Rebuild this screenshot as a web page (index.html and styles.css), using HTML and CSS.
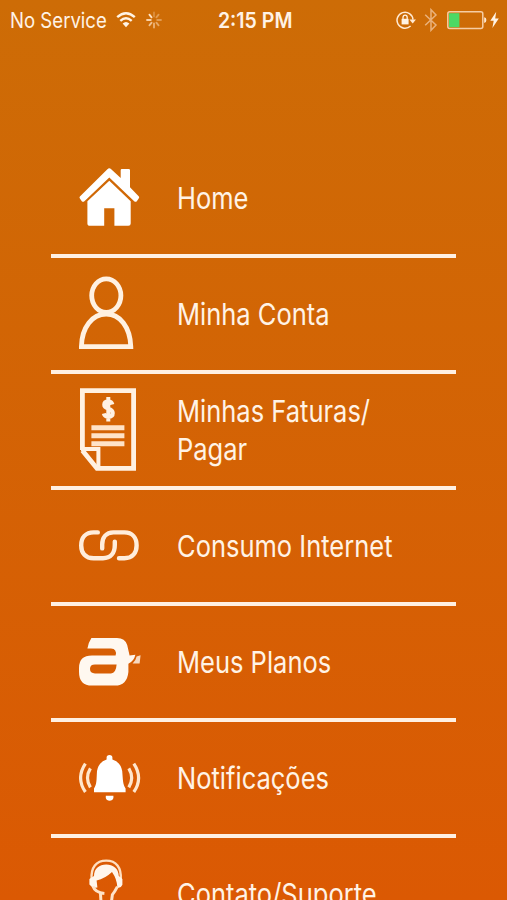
FILE: index.html
```html
<!DOCTYPE html>
<html lang="pt-BR">
<head>
    <meta charset="UTF-8">
    <meta name="viewport" content="width=device-width, initial-scale=1.0">
    <title>Menu</title>
    <link rel="stylesheet" href="styles.css">
</head>
<body>

<header class="status">
    <div class="status-left">
        <span class="service">No Service</span>
        <svg class="wifi" width="20" height="18" viewBox="0 0 20 18">
            <path d="M1.2 6.2Q10-1.8 18.8 6.2M4.3 9.8Q10 4.6 15.7 9.8" fill="none" stroke="#fff3e4" stroke-width="2.4"/>
            <path d="M6.6 12.4Q10 9.4 13.4 12.4L10 16.2Z" fill="#fff3e4"/>
        </svg>
        <svg class="spinner" width="16" height="18" viewBox="0 0 16 18" fill="none" stroke="#ffe3c4" stroke-width="1.8" stroke-linecap="round">
            <path d="M8 1.5V5.5" opacity=".3"/>
            <path d="M12.6 3.6L10.4 6.4" opacity=".4"/>
            <path d="M15 9H11.2" opacity=".4"/>
            <path d="M12.6 14.4L10.4 11.6" opacity=".5"/>
            <path d="M8 16.5V12.5" opacity=".6"/>
            <path d="M3.4 14.4L5.6 11.6" opacity=".7"/>
            <path d="M1 9H4.8" opacity=".85"/>
            <path d="M3.4 3.6L5.6 6.4"/>
        </svg>
    </div>
    <span class="time">2:15 PM</span>
    <div class="status-right">
        <svg class="lock" width="20" height="20" viewBox="0 0 20 20">
            <path d="M14.6 16A8 8 0 1 1 17 9.6" fill="none" stroke="#ffe9d2" stroke-width="1.5"/>
            <path d="M13.4 9.6H20L16.7 13.4Z" fill="#ffe9d2"/>
            <rect x="5.6" y="8.8" width="7" height="5.6" fill="#fff3e4"/>
            <path d="M7 9V7.4a2.1 2.3 0 0 1 4.2 0V9" fill="none" stroke="#fff3e4" stroke-width="1.3"/>
        </svg>
        <svg class="bluetooth" width="14" height="24" viewBox="0 0 14 24">
            <path d="M1.2 6.8L12 17L7 22.3V1.7L12 7L1.2 17.2" fill="none" stroke="#eab27c" stroke-width="1.5"/>
        </svg>
        <svg class="battery" width="40" height="20" viewBox="0 0 40 20">
            <rect x=".8" y="1.8" width="35" height="16.6" rx="2" fill="none" stroke="#f6cda4" stroke-width="1.5"/>
            <rect x="2" y="3.2" width="10.4" height="14" fill="#4cd964"/>
            <path d="M37.2 7.2Q39.4 7.4 39.4 10T37.2 13Z" fill="#ffe9d2"/>
        </svg>
        <svg class="bolt" width="9" height="18" viewBox="0 0 9 18">
            <path d="M6.2 .8L.3 9.8H3.7L2.4 17L8.8 7.6H5.2Z" fill="#fff3e4"/>
        </svg>
    </div>
</header>

<nav class="menu">
    <a class="item">
        <svg class="icon" viewBox="0 0 64 112" fill="#fff">
            <path d="M28.4 27.2Q30.3 25.4 32.2 27.2L41.7 36V28.2Q41.7 27 42.9 27H49.8Q51 27 51 28.2V45.2L59.9 54.4Q60.6 55.5 59.7 56.5L57.8 59.2Q56.6 60.4 55.2 59.2L30.3 35.4L5.4 59.2Q4 60.4 2.8 59.2L.9 56.5Q0 55.5 .9 54.4Z"/>
            <path d="M30.3 38.8L51.7 59.2V81.4Q51.7 83.8 49.4 83.8H35.4V66.2H25.2V83.8H11Q8.4 83.8 8.4 81.4V59.2Z"/>
        </svg>
        <span class="label">Home</span>
    </a>
    <a class="item">
        <svg class="icon" viewBox="0 0 64 112" fill="none" stroke="#fff1e2" stroke-width="4.8">
            <ellipse cx="27.3" cy="37.6" rx="14.6" ry="16.8"/>
            <path d="M2.4 88.6C2.8 69 13.5 56 27.2 56S51.2 69 51.8 88.6Z"/>
        </svg>
        <span class="label">Minha Conta</span>
    </a>
    <a class="item">
        <svg class="icon" viewBox="0 0 64 112" fill="none" stroke="#fff1e2">
            <path d="M3.4 76V16.7H54.6V94.4H18L3.4 76.4" stroke-width="4.8"/>
            <path d="M2 75H19.4V95" stroke-width="4"/>
            <path d="M33.4 30.4Q32.6 27.4 29.2 27.4Q25.2 27.4 25.2 30.8Q25.2 33.6 29.3 34.6Q33.8 35.8 33.8 39Q33.8 42.8 29.4 42.8Q25.6 42.8 24.8 39.6M29.3 23V47.4" stroke-width="4"/>
            <path d="M12.4 53.7H45.4M12.4 61.8H45.4M12.4 69.8H45.4" stroke-width="5" stroke="#ffe3c8"/>
        </svg>
        <span class="label">Minhas Faturas/<br>Pagar</span>
    </a>
    <a class="item">
        <svg class="icon" viewBox="0 0 64 112" fill="none" stroke="#ffeddb" stroke-width="4.4" stroke-linecap="round">
            <path d="M18.8 42.4H14.6C6.6 42.4 2.2 47.8 2.2 55.4S6.6 68.2 14.6 68.2H24C31.6 68.2 35.8 63 35.8 55V51.6"/>
            <path d="M40 68.2H45.4C53.4 68.2 57.6 62.8 57.6 55.4S53.4 42.4 45.4 42.4H34.4C27 42.4 23.2 47.6 23.2 54.6V58.4"/>
        </svg>
        <span class="label">Consumo Internet</span>
    </a>
    <a class="item">
        <svg class="icon" viewBox="0 0 64 112" fill="#fff8f0">
            <path fill-rule="evenodd" d="M12.4 32H38Q46 32 48.2 39L50.6 49.4L56.4 48.8Q55 55 49.4 57.8V66Q48 79.6 36 79.6H13Q0 79.6 0 66V62Q0 49.6 13 49.6H36.6Q38.2 43 32 42.6H8.4Q9.4 36.4 12.4 32ZM16 58.6Q11 58.6 11 63Q11 67.4 16 67.4H32Q37 67.4 37.6 58.6Z"/>
            <path d="M57.6 50.4L61.6 49.2L60.6 57.6H53.6Q56.8 54.6 57.6 50.4Z" opacity=".8"/>
        </svg>
        <span class="label">Meus Planos</span>
    </a>
    <a class="item">
        <svg class="icon" viewBox="0 0 64 112">
            <path d="M27.6 37.6V35.6Q27.6 33 30.5 33T33.4 35.6V37.6Q41.6 40 43.2 49C44 58 43.6 61.6 46.6 66.4V70.2H15V66.4C18 61.6 17.4 58 18 49Q19.6 40 27.6 37.6ZM26.8 73.8H34.4V76Q33.6 78.8 30.6 78.8T26.8 76Z" fill="#fff"/>
            <path d="M6.4 41.6Q-3.2 56 6.4 70M11.4 46.4Q5.6 56 11.4 65.4M54.8 41.6Q64.4 56 54.8 70M49.8 46.4Q55.6 56 49.8 65.4" fill="none" stroke="#ffe6cd" stroke-width="3.2"/>
        </svg>
        <span class="label">Notificações</span>
    </a>
    <a class="item">
        <svg class="icon" viewBox="0 0 64 112">
            <path d="M12.6 42C11.6 29 17.4 22.6 27.2 22.6S42.6 29 41.8 42" fill="none" stroke="#ffdfc0" stroke-width="2.4"/>
            <path d="M15 38C15 30.4 20.4 26.4 27.2 26.4S39.6 30.4 39.8 38L43.4 41V46.8Q42 50.4 38.4 49.6Q38 41 33 34Q26 40.6 17.6 42.6L18.4 49.4L14 50L10.4 46.6V41Z" fill="#fff6ec"/>
            <path d="M14 48.4Q16 54.6 25.4 55.4M38.4 48.6Q35.6 54 33.4 56.6L32.4 64M21.4 54.4L22 64" fill="none" stroke="#ffe3c8" stroke-width="3"/>
        </svg>
        <span class="label">Contato/Suporte</span>
    </a>
</nav>

</body>
</html>
```
FILE: styles.css
```css
* {
    box-sizing: border-box;
}

body {
    margin: 0;
    height: 900px;
    overflow: hidden;
    background: linear-gradient(#cd6c06, #db5903);
    color: #fff3e6;
    font-family: Inter, "Liberation Sans", sans-serif;
}

/* status bar */
.status {
    display: grid;
    grid-template-columns: 1fr 76px 1fr;
    align-items: center;
    height: 40px;
    padding: 0 8px 0 10px;
    font-size: 21px;
    white-space: nowrap;
}

.status-left,
.status-right {
    display: flex;
    align-items: center;
}

.status-right {
    justify-content: flex-end;
}

.service {
    width: 106px;
    transform: scaleX(0.885);
    transform-origin: left;
}

.spinner {
    margin-left: 10px;
}

.time {
    padding-left: 1px;
    font-weight: 600;
    transform: scaleX(0.93);
    transform-origin: left;
}

.bluetooth {
    margin: 0 9px 0 8px;
}

.bolt {
    margin-left: 3px;
}

/* menu list */
.menu {
    width: 405px;
    margin: 102px 0 0 51px;
}

.item {
    display: flex;
    align-items: center;
    gap: 34px;
    height: 116px;
    padding-left: 28px;
    border-bottom: 4px solid #fff0e2;
}

.icon {
    flex: none;
    width: 64px;
    height: 112px;
}

.label {
    flex: none;
    font-size: 30px;
    font-weight: 400;
    line-height: 38px;
    white-space: nowrap;
    transform: scaleX(0.85);
    transform-origin: left;
}
```
